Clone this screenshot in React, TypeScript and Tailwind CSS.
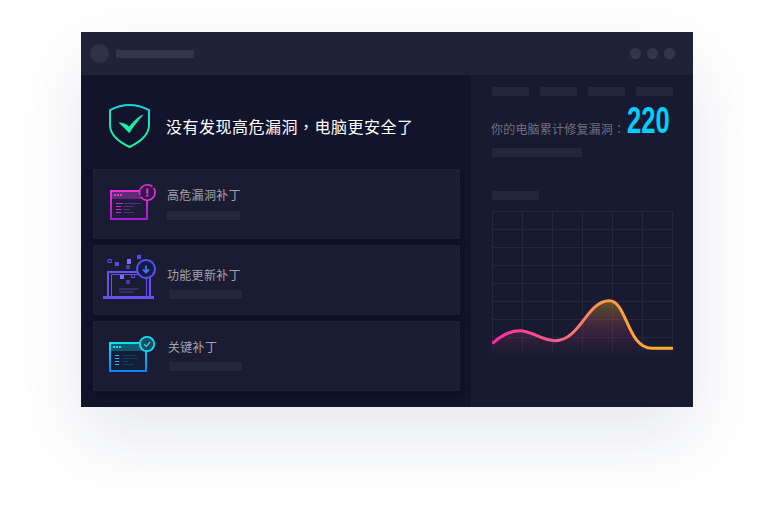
import React from "react";

const cjk = "font-['Noto_Sans_CJK_SC','Noto_Sans',sans-serif]";
const punct = "font-['Noto_Sans_CJK_TC','Noto_Sans',sans-serif]";

function Shield() {
  return (
    <svg width="42" height="44" viewBox="0 0 42 44" fill="none" className="block">
      <defs>
        <linearGradient id="sg" x1="0" y1="0" x2="0" y2="1">
          <stop offset="0" stopColor="#10d9d6" />
          <stop offset="1" stopColor="#1df5a0" />
        </linearGradient>
      </defs>
      <path d="M1 6.2C7 3 13.5 1 20.5 1C27.5 1 34 3 40 6.2V21C40 30 32 37.5 20.5 43C9 37.5 1 30 1 21Z" stroke="url(#sg)" strokeWidth="2" />
      <path d="M10.3 18.7C13.5 19 17.5 20.5 20.3 23C23.5 18.5 28 14 33.7 11C29 16.5 24 22.5 20.3 28.7Z" fill="#1cf0b0" stroke="#1cf0b0" strokeWidth="0.8" strokeLinejoin="round" />
    </svg>
  );
}

function PinkIcon() {
  return (
    <svg width="48" height="38" viewBox="0 0 48 38" fill="none" className="block overflow-visible">
      <defs>
        <linearGradient id="pg" x1="0" y1="0" x2="0" y2="1">
          <stop offset="0" stopColor="#f72fd2" />
          <stop offset="1" stopColor="#a51bd8" />
        </linearGradient>
      </defs>
      <rect x="1" y="7" width="36" height="28" fill="#1f1b3a" stroke="url(#pg)" strokeWidth="2" />
      <rect x="2" y="8" width="34" height="7" fill="#5f2a78" />
      <g fill="#e83ad8">
        <rect x="4" y="10" width="2" height="2" />
        <rect x="7" y="10" width="2" height="2" />
        <rect x="10" y="10" width="2" height="2" />
      </g>
      <g fill="#c42bd6">
        <rect x="6" y="19" width="7" height="1" />
        <rect x="6" y="22" width="5" height="1" />
        <rect x="6" y="25" width="5" height="1" />
        <rect x="6" y="28" width="5" height="1" />
      </g>
      <g fill="#5c2a82">
        <rect x="14" y="19" width="17" height="1" />
        <rect x="14" y="22" width="10" height="1" />
        <rect x="14" y="25" width="6" height="1" />
        <rect x="14" y="28" width="10" height="1" />
      </g>
      <circle cx="37.3" cy="8.5" r="7.8" fill="#33164f" stroke="#ee2fd4" strokeWidth="1.6" strokeDasharray="20 2 20 2" />
      <rect x="36.3" y="4.5" width="2" height="5" fill="#f23ad2" />
      <rect x="36.3" y="10.5" width="2" height="2" fill="#f23ad2" />
    </svg>
  );
}

function LaptopIcon() {
  return (
    <svg width="54" height="46" viewBox="0 0 54 46" fill="none" className="block overflow-visible">
      <rect x="5.2" y="3.5" width="3" height="3" stroke="#5a48f0" />
      <rect x="12" y="6" width="4" height="4" fill="#5a48f0" />
      <rect x="24" y="3" width="4" height="5" fill="#8468fa" />
      <rect x="34" y="-1" width="4" height="4" fill="#5a48f0" />
      <rect x="23" y="9" width="4" height="4" fill="#463ca8" />
      <rect x="28.5" y="18.5" width="3" height="3" stroke="#5a48f0" />
      <rect x="17" y="19" width="4" height="4" fill="#8468fa" />
      <rect x="23" y="24" width="4" height="4" fill="#463ca8" />
      <path d="M5 40V16H47V40" stroke="#6a4ff5" strokeWidth="2" />
      <path d="M8.5 40V18.5H43.5V40" stroke="#6a4ff5" strokeWidth="1" />
      <rect x="16" y="32" width="20" height="2" fill="#2f2f68" />
      <rect x="16" y="35" width="14" height="2" fill="#2f2f68" />
      <rect x="0" y="40" width="51" height="3" fill="#6a4ff5" />
      <circle cx="43" cy="13" r="9" fill="#161a48" stroke="#5a52f0" strokeWidth="2" />
      <path d="M43 9.5V16.5M40 13.5L43 16.5L46 13.5" stroke="#3e7ce0" strokeWidth="1.8" />
    </svg>
  );
}

function CyanIcon() {
  return (
    <svg width="48" height="38" viewBox="0 0 48 38" fill="none" className="block overflow-visible">
      <defs>
        <linearGradient id="cg" x1="0" y1="0" x2="0" y2="1">
          <stop offset="0" stopColor="#05e3f0" />
          <stop offset="1" stopColor="#0a86f5" />
        </linearGradient>
      </defs>
      <rect x="1" y="8" width="36" height="28" fill="#141d3a" stroke="url(#cg)" strokeWidth="2" />
      <rect x="2" y="9" width="34" height="7" fill="#0f5a70" />
      <g fill="#0ee0ee">
        <rect x="4" y="11" width="2" height="2" />
        <rect x="7" y="11" width="2" height="2" />
        <rect x="10" y="11" width="2" height="2" />
      </g>
      <g fill="#0cc0f5">
        <rect x="6" y="20" width="4" height="1" />
        <rect x="6" y="23" width="4" height="1" />
        <rect x="6" y="26" width="4" height="1" />
        <rect x="6" y="29" width="4" height="1" />
      </g>
      <g fill="#123f68">
        <rect x="14" y="20" width="13" height="1" />
        <rect x="14" y="23" width="15" height="1" />
        <rect x="14" y="26" width="5" height="1" />
        <rect x="14" y="29" width="11" height="1" />
      </g>
      <circle cx="38" cy="9" r="7.2" fill="#144a62" stroke="#06e5f5" strokeWidth="1.8" />
      <path d="M35 9.2L37.4 11.4L41 7" stroke="#3fd3de" strokeWidth="1.2" />
    </svg>
  );
}

function Chart() {
  const curve = "M1.3 131.7C10 124 18 119.7 27.3 119.7C40 119.7 50 129.7 63 129.7C88 129.7 95 89.7 117.3 89.7C135 89.7 135 137.3 160 137.3L180 137.3";
  return (
    <svg width="181" height="150" viewBox="0 0 181 150" fill="none" className="block">
      <defs>
        <linearGradient id="line" x1="0" y1="0" x2="1" y2="0">
          <stop offset="0" stopColor="#fb2c9f" />
          <stop offset="0.35" stopColor="#fb5c8c" />
          <stop offset="0.62" stopColor="#fe9948" />
          <stop offset="1" stopColor="#fdb02c" />
        </linearGradient>
        <linearGradient id="fill" gradientUnits="userSpaceOnUse" x1="0" y1="90" x2="0" y2="146">
          <stop offset="0" stopColor="#c8a020" stopOpacity="0.42" />
          <stop offset="0.55" stopColor="#b03a68" stopOpacity="0.22" />
          <stop offset="1" stopColor="#a8335f" stopOpacity="0" />
        </linearGradient>
      </defs>
      <g stroke="#25273e" strokeWidth="1">
        {[0, 1, 2, 3, 4, 5, 6, 7].map((i) => (
          <line key={i} x1="0" x2="181" y1={0.5 + i * 18} y2={0.5 + i * 18} />
        ))}
        {[0, 1, 2, 3, 4, 5, 6].map((i) => (
          <line key={i} y1="0" y2="140" x1={0.5 + i * 30} x2={0.5 + i * 30} />
        ))}
      </g>
      <path d={curve + "V146H1.3Z"} fill="url(#fill)" />
      <path d={curve} stroke="url(#line)" strokeWidth="3" strokeLinecap="round" />
    </svg>
  );
}

function Bar({ className }: { className: string }) {
  return <div className={"h-[9px] " + className} />;
}

function Card({ icon, label, iconClass, textClass, barClass }: { icon: React.ReactNode; label: string; iconClass: string; textClass: string; barClass: string }) {
  return (
    <div className="flex h-[70px] border border-[#1e2038] bg-[#1a1c34] shadow-[0_2px_8px_rgba(8,9,25,0.6)]">
      <div className={iconClass}>{icon}</div>
      <div className={"flex flex-col " + textClass}>
        <div className={"text-[12px] tracking-[0.3px] leading-[18px] text-[#a2a3ae] " + cjk}>{label}</div>
        <Bar className={"w-[73px] bg-[#25273c] " + barClass} />
      </div>
    </div>
  );
}

export default function App() {
  return (
    <div className="w-[773px] h-[530px] bg-white overflow-hidden pl-[81px] pt-[32px]">
      <div className="w-[612px] h-[375px] flex flex-col bg-[#171a30] shadow-[0_30px_70px_rgba(30,40,80,0.11)]">
        <div className="h-[43px] shrink-0 bg-[#1f2239] flex items-center pl-[9px] pr-[18px]">
          <div className="w-[19px] h-[19px] rounded-full bg-[#2f3148]" />
          <div className="ml-[7px] w-[78px] h-[8px] bg-[#333549]" />
          <div className="ml-auto flex gap-[6px]">
            <div className="w-[11px] h-[11px] rounded-full bg-[#35364c]" />
            <div className="w-[11px] h-[11px] rounded-full bg-[#35364c]" />
            <div className="w-[11px] h-[11px] rounded-full bg-[#35364c]" />
          </div>
        </div>
        <div className="flex flex-1 min-h-0">
          <div className="w-[390px] shrink-0 bg-[#12142b] pl-[12px] pr-[11px]">
            <div className="h-[94px] flex items-center">
              <div className="ml-[16px] mt-[7px]"><Shield /></div>
              <div className={"ml-[15px] mt-[7px] text-[16px] tracking-[0.5px] text-white " + cjk}>
                没有发现高危漏洞<span className={punct}>，</span>电脑更安全了
              </div>
            </div>
            <div className="flex flex-col gap-[6px]">
              <Card iconClass="ml-[16px] mt-[14px]" textClass="ml-[9px] mt-[16px]" barClass="mt-[7px]" icon={<PinkIcon />} label="高危漏洞补丁" />
              <Card iconClass="ml-[9px] mt-[10px]" textClass="ml-[10px] mt-[20px]" barClass="mt-[6px] ml-[2px]" icon={<LaptopIcon />} label="功能更新补丁" />
              <Card iconClass="ml-[15px] mt-[13px]" textClass="ml-[11px] mt-[16px]" barClass="mt-[6px] ml-[1px]" icon={<CyanIcon />} label="关键补丁" />
            </div>
          </div>
          <div className="flex-1 pl-[21px] pr-[20px] pt-[12px]">
            <div className="flex justify-between">
              <Bar className="w-[37px] bg-[#24263c]" />
              <Bar className="w-[37px] bg-[#24263c]" />
              <Bar className="w-[37px] bg-[#24263c]" />
              <Bar className="w-[37px] bg-[#24263c]" />
            </div>
            <div className="flex items-end h-[36px] mt-[7px]">
              <span className={"text-[12px] tracking-[0.2px] leading-[18px] text-[#6f7080] mb-[1px] -ml-[1px] " + cjk}>
                你的电脑累计修复漏洞<span className={punct}>：</span>
              </span>
              <span className="font-['Liberation_Sans',sans-serif] font-bold text-[36px] leading-[36px] text-[#00cfff] inline-block scale-x-[0.71] origin-left ml-[2px] w-[42px]">220</span>
            </div>
            <Bar className="mt-[9px] w-[90px] bg-[#24263c]" />
            <Bar className="mt-[34px] w-[47px] bg-[#24263c]" />
            <div className="mt-[11px]"><Chart /></div>
          </div>
        </div>
      </div>
    </div>
  );
}
